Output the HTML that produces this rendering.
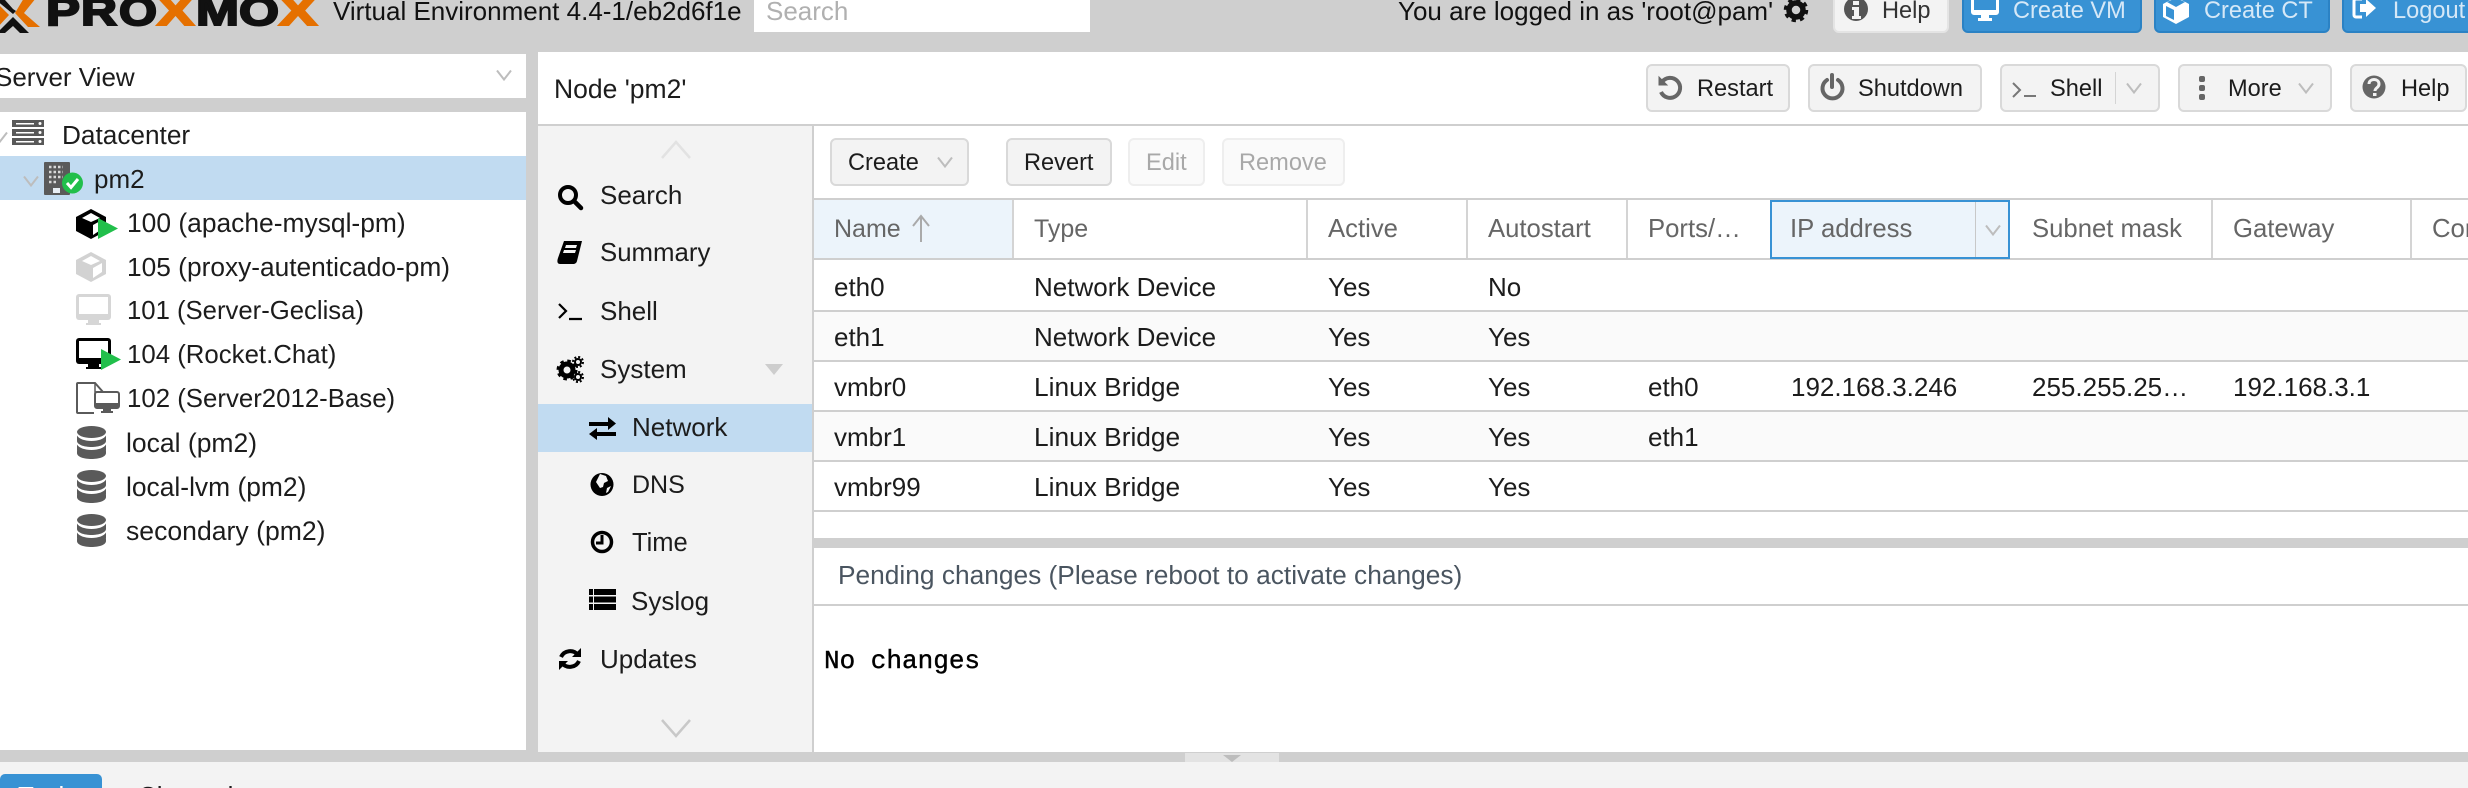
<!DOCTYPE html>
<html><head><meta charset="utf-8"><title>Proxmox</title>
<style>
html,body{margin:0;padding:0;background:#fff}
#p{position:relative;width:2468px;height:788px;overflow:hidden;background:#cfcfcf;font-family:"Liberation Sans",sans-serif;font-size:26px;color:#1c1c1c}
#p div{position:absolute;box-sizing:border-box}
.t{white-space:nowrap;line-height:30px;height:30px}
.h{color:#666;font-size:25.7px}
.s{font-size:23.6px}
.b{background:#f3f3f3;border:2px solid #d9d9d9;border-radius:6px}
.u{background:#3892d4;border:2px solid #2b82c4;border-radius:0 0 6px 6px;top:-8px;height:41px}
svg{position:absolute;left:0;top:0;overflow:visible}
</style></head><body><div id="p">
<!-- panels -->
<div style="left:754px;top:0;width:336px;height:32px;background:#fff"></div>
<div style="left:0;top:54px;width:526px;height:44px;background:#fff"></div>
<div style="left:0;top:112px;width:526px;height:638px;background:#fff"></div>
<div style="left:0;top:156px;width:526px;height:44px;background:#c1dbf1"></div>
<div style="left:538px;top:52px;width:1930px;height:72px;background:#fff"></div>
<div style="left:538px;top:126px;width:274px;height:626px;background:#f3f3f3"></div>
<div style="left:538px;top:404px;width:274px;height:48px;background:#c1dbf1"></div>
<div style="left:814px;top:126px;width:1654px;height:412px;background:#fff"></div>
<div style="left:814px;top:548px;width:1654px;height:204px;background:#fff"></div>
<div style="left:814px;top:604px;width:1654px;height:2px;background:#cfcfcf"></div>
<div style="left:0;top:762px;width:2468px;height:26px;background:#f3f3f3"></div>
<div style="left:1185px;top:753px;width:94px;height:9px;background:#e3e3e3"></div>
<div style="left:0;top:774px;width:102px;height:20px;background:#3892d4;border-radius:5px 5px 0 0"></div>
<!-- grid -->
<div style="left:814px;top:198px;width:1654px;height:2px;background:#cfcfcf"></div>
<div style="left:814px;top:200px;width:199px;height:58px;background:#ecf4fb"></div>
<div style="left:814px;top:258px;width:1654px;height:2px;background:#cfcfcf"></div>
<div style="left:814px;top:312px;width:1654px;height:48px;background:#fafafa"></div>
<div style="left:814px;top:412px;width:1654px;height:48px;background:#fafafa"></div>
<div style="left:814px;top:310px;width:1654px;height:2px;background:#cfcfcf"></div>
<div style="left:814px;top:360px;width:1654px;height:2px;background:#cfcfcf"></div>
<div style="left:814px;top:410px;width:1654px;height:2px;background:#cfcfcf"></div>
<div style="left:814px;top:460px;width:1654px;height:2px;background:#cfcfcf"></div>
<div style="left:814px;top:510px;width:1654px;height:2px;background:#cfcfcf"></div>
<div style="left:1012px;top:200px;width:2px;height:58px;background:#d4d4d4"></div>
<div style="left:1306px;top:200px;width:2px;height:58px;background:#d4d4d4"></div>
<div style="left:1466px;top:200px;width:2px;height:58px;background:#d4d4d4"></div>
<div style="left:1626px;top:200px;width:2px;height:58px;background:#d4d4d4"></div>
<div style="left:2211px;top:200px;width:2px;height:58px;background:#d4d4d4"></div>
<div style="left:2410px;top:200px;width:2px;height:58px;background:#d4d4d4"></div>
<div style="left:1770px;top:200px;width:240px;height:59px;background:#ecf4fb;border:2px solid #3892d4"></div>
<div style="left:1975px;top:202px;width:1px;height:55px;background:#c8c8c8"></div>
<!-- buttons -->
<div class="b" style="left:1833px;top:-8px;width:116px;height:41px;border-color:#e4e4e4"></div>
<div class="u" style="left:1962px;width:180px"></div>
<div class="u" style="left:2154px;width:176px"></div>
<div class="u" style="left:2342px;width:160px"></div>
<div class="b" style="left:1646px;top:64px;width:144px;height:48px"></div>
<div class="b" style="left:1808px;top:64px;width:174px;height:48px"></div>
<div class="b" style="left:2000px;top:64px;width:160px;height:48px"></div>
<div style="left:2115px;top:72px;width:1px;height:32px;background:#d4d4d4"></div>
<div class="b" style="left:2178px;top:64px;width:154px;height:48px"></div>
<div class="b" style="left:2350px;top:64px;width:117px;height:48px"></div>
<div class="b" style="left:830px;top:138px;width:139px;height:48px"></div>
<div class="b" style="left:1006px;top:138px;width:106px;height:48px"></div>
<div class="b" style="left:1128px;top:138px;width:77px;height:48px;background:#fafafa;border-color:#eee"></div>
<div class="b" style="left:1222px;top:138px;width:123px;height:48px;background:#fafafa;border-color:#eee"></div>

<!-- header text -->
<div class="t" style="left:333px;top:-4px;color:#111">Virtual Environment 4.4-1/eb2d6f1e</div>
<div class="t" style="left:766px;top:-4px;color:#b0b0b0">Search</div>
<div class="t" style="left:1398px;top:-4px;color:#111">You are logged in as 'root@pam'</div>
<div class="t s" style="left:1882px;top:-4px;color:#333">Help</div>
<div class="t s" style="left:2013px;top:-4px;color:#d5e8f7">Create VM</div>
<div class="t s" style="left:2204px;top:-4px;color:#d5e8f7">Create CT</div>
<div class="t s" style="left:2393px;top:-4px;color:#d5e8f7">Logout</div>
<!-- tree text -->
<div class="t" style="left:-5px;top:62px">Server View</div>
<div class="t" style="left:62px;top:120px;font-size:26.2px">Datacenter</div>
<div class="t" style="left:94px;top:164px">pm2</div>
<div class="t" style="left:127px;top:208px;font-size:26.4px">100 (apache-mysql-pm)</div>
<div class="t" style="left:127px;top:252px;font-size:26.3px">105 (proxy-autenticado-pm)</div>
<div class="t" style="left:127px;top:296px;font-size:25.7px">101 (Server-Geclisa)</div>
<div class="t" style="left:127px;top:340px;font-size:25.8px">104 (Rocket.Chat)</div>
<div class="t" style="left:127px;top:384px;font-size:25.8px">102 (Server2012-Base)</div>
<div class="t" style="left:126px;top:428px;font-size:26.5px">local (pm2)</div>
<div class="t" style="left:126px;top:472px;font-size:26.4px">local-lvm (pm2)</div>
<div class="t" style="left:126px;top:516px;font-size:26.6px">secondary (pm2)</div>
<!-- nav text -->
<div class="t" style="left:554px;top:74px;font-size:26.5px">Node 'pm2'</div>
<div class="t" style="left:600px;top:180px">Search</div>
<div class="t" style="left:600px;top:238px;font-size:25.8px">Summary</div>
<div class="t" style="left:600px;top:296px">Shell</div>
<div class="t" style="left:600px;top:354px">System</div>
<div class="t" style="left:632px;top:412px">Network</div>
<div class="t" style="left:632px;top:470px;font-size:25px">DNS</div>
<div class="t" style="left:632px;top:528px;font-size:25.5px">Time</div>
<div class="t" style="left:631px;top:586px">Syslog</div>
<div class="t" style="left:600px;top:644px">Updates</div>
<!-- toolbar text -->
<div class="t s" style="left:1697px;top:74px">Restart</div>
<div class="t s" style="left:1858px;top:74px">Shutdown</div>
<div class="t s" style="left:2050px;top:74px">Shell</div>
<div class="t s" style="left:2228px;top:74px">More</div>
<div class="t s" style="left:2401px;top:74px">Help</div>
<div class="t s" style="left:848px;top:148px">Create</div>
<div class="t s" style="left:1024px;top:148px">Revert</div>
<div class="t s" style="left:1146px;top:148px;color:#a8a8a8">Edit</div>
<div class="t s" style="left:1239px;top:148px;color:#a8a8a8">Remove</div>
<!-- grid header -->
<div class="t h" style="left:834px;top:214px;font-size:25px">Name</div>
<div class="t h" style="left:1034px;top:214px;font-size:25px">Type</div>
<div class="t h" style="left:1328px;top:214px">Active</div>
<div class="t h" style="left:1488px;top:214px">Autostart</div>
<div class="t h" style="left:1648px;top:214px">Ports/…</div>
<div class="t h" style="left:1790px;top:214px">IP address</div>
<div class="t h" style="left:2032px;top:214px">Subnet mask</div>
<div class="t h" style="left:2233px;top:214px">Gateway</div>
<div class="t h" style="left:2432px;top:214px">Comment</div>
<!-- rows -->
<div class="t" style="left:834px;top:272px">eth0</div><div class="t" style="left:1034px;top:272px">Network Device</div><div class="t" style="left:1328px;top:272px">Yes</div><div class="t" style="left:1488px;top:272px">No</div>
<div class="t" style="left:834px;top:322px">eth1</div><div class="t" style="left:1034px;top:322px">Network Device</div><div class="t" style="left:1328px;top:322px">Yes</div><div class="t" style="left:1488px;top:322px">Yes</div>
<div class="t" style="left:834px;top:372px">vmbr0</div><div class="t" style="left:1034px;top:372px;font-size:26.3px">Linux Bridge</div><div class="t" style="left:1328px;top:372px">Yes</div><div class="t" style="left:1488px;top:372px">Yes</div><div class="t" style="left:1648px;top:372px">eth0</div><div class="t" style="left:1791px;top:372px">192.168.3.246</div><div class="t" style="left:2032px;top:372px">255.255.25…</div><div class="t" style="left:2233px;top:372px">192.168.3.1</div>
<div class="t" style="left:834px;top:422px">vmbr1</div><div class="t" style="left:1034px;top:422px;font-size:26.3px">Linux Bridge</div><div class="t" style="left:1328px;top:422px">Yes</div><div class="t" style="left:1488px;top:422px">Yes</div><div class="t" style="left:1648px;top:422px">eth1</div>
<div class="t" style="left:834px;top:472px">vmbr99</div><div class="t" style="left:1034px;top:472px;font-size:26.3px">Linux Bridge</div><div class="t" style="left:1328px;top:472px">Yes</div><div class="t" style="left:1488px;top:472px">Yes</div>
<div class="t" style="left:838px;top:560px;color:#4a5560;font-size:26.3px">Pending changes (Please reboot to activate changes)</div>
<div class="t" style="left:824px;top:646px;font-family:'Liberation Mono',monospace;font-size:26px;color:#000;-webkit-text-stroke:.4px #000">No changes</div>
<div class="t" style="left:18px;top:781px;color:#fff">Tasks</div>
<div class="t" style="left:138px;top:781px">Cluster log</div>

<svg width="2468" height="788" viewBox="0 0 2468 788" fill="none">
<defs>
<g id="chev"><path d="M-7-4.500 0 4.500 7-4.500" stroke="#bdbdbd" stroke-width="2"/></g>
<g id="db" fill="#5a5a5a"><ellipse cx="14.500" cy="6" rx="14.500" ry="6"/><path d="M0 9.500C2 13 8 15 14.500 15S27 13 29 9.500V15C29 18.500 22 21 14.500 21S0 18.500 0 15Z"/><path d="M0 18.500C2 22 8 24 14.500 24S27 22 29 18.500V24C29 27.500 22 30 14.500 30S0 27.500 0 24Z"/><path d="M0 24.500C2 28 8 29 14.500 29S27 28 29 24.500V27C29 31 22 33 14.500 33S0 31 0 27Z"/></g>
<g id="play"><path d="M0 0 20 10.500 0 21Z" fill="#21bf4b"/></g>
</defs>
<!-- logo -->
<path d="M24-2H36L24 13 40 27H28L15 13Z" fill="#e57000"/>
<path d="M-3 3 9 15-3 28Z" fill="#e57000"/>
<path d="M13 17 29 33H20L13 26 5 33H-3Z" fill="#111"/>
<path d="M-4 0H5L13 9 16 11 13 14Z" fill="#111"/>
<g font-family="Liberation Sans" font-weight="700" font-size="40" stroke-width="2">
<text x="46" y="25" fill="#111" stroke="#111" textLength="34" lengthAdjust="spacingAndGlyphs">P</text>
<text x="81" y="25" fill="#111" stroke="#111" textLength="36" lengthAdjust="spacingAndGlyphs">R</text>
<text x="119" y="25" fill="#111" stroke="#111" textLength="38" lengthAdjust="spacingAndGlyphs">O</text>
<text x="157" y="25" fill="#e57000" stroke="#e57000" textLength="37" lengthAdjust="spacingAndGlyphs">X</text>
<text x="196" y="25" fill="#111" stroke="#111" textLength="43" lengthAdjust="spacingAndGlyphs">M</text>
<text x="239" y="25" fill="#111" stroke="#111" textLength="40" lengthAdjust="spacingAndGlyphs">O</text>
<text x="279" y="25" fill="#e57000" stroke="#e57000" textLength="38" lengthAdjust="spacingAndGlyphs">X</text>
</g>
<!-- top icons -->
<g transform="translate(1796 10)" stroke="#111"><circle r="7" stroke-width="5.500"/><circle r="10.500" stroke-width="3.500" stroke-dasharray="4.200 4.050"/></g>
<g transform="translate(5 0)"><circle cx="1851" cy="9" r="12" fill="#555"/><path d="M1848 1h6v4h-6zM1847 7h7v9h2v3h-9v-3h2v-6h-2z" fill="#f3f3f3"/></g>
<g transform="translate(7 0)"><path d="M1967-5h22a3 3 0 0 1 3 3v14a3 3 0 0 1-3 3h-7v3h3v3h-14v-3h3v-3h-7a3 3 0 0 1-3-3v-14a3 3 0 0 1 3-3z" fill="#fff"/><path d="M1967-5h22v15h-22z" fill="#3892d4"/></g>
<g transform="translate(11 0)"><path d="M2165-3 2178 4V17L2165 24 2152 17V4Z" fill="#fff"/><path d="M2163 10 2155 6V16L2163 20Z M2165 7 2174 2 2165-2 2156 2Z" fill="#3892d4"/></g>
<g transform="translate(16 0)"><path d="M2346-1h-6a2 2 0 0 0-2 2v14a2 2 0 0 0 2 2h6" stroke="#fff" stroke-width="3"/><path d="M2344 4h6v-5l10 9-10 9v-5h-6z" fill="#fff"/></g>
<!-- toolbar icons -->
<path d="M1662 82a10 10 0 1 1-1 10" stroke="#666" stroke-width="4"/><path d="M1659 77 1667 85 1659 85Z" fill="#666" stroke="#666"/>
<g transform="translate(4 -1)"><path d="M1823 81a10 10 0 1 0 11 0" stroke="#666" stroke-width="4" stroke-linecap="round"/><path d="M1828 76v12" stroke="#666" stroke-width="4" stroke-linecap="round"/></g>
<g transform="translate(8 0)"><path d="M2005 83 2012 90 2005 97M2016 96h12" stroke="#777" stroke-width="2"/></g>
<g fill="#666"><rect x="2199" y="76" width="6" height="6" rx="2"/><rect x="2199" y="85" width="6" height="6" rx="2"/><rect x="2199" y="94" width="6" height="6" rx="2"/></g>
<g transform="translate(15 0)"><circle cx="2359" cy="87" r="11.500" fill="#666"/><path d="M2354 84c0-6 10-6 10 0 0 4-4 3.500-4 7" stroke="#f3f3f3" stroke-width="3"/><rect x="2358" y="93" width="3.500" height="3" fill="#f3f3f3"/></g>
<use href="#chev" x="2134" y="88"/><use href="#chev" x="2306" y="88"/><use href="#chev" x="945" y="162"/><use href="#chev" x="1993" y="230"/>
<path d="M921 242V217M913 226 921 216 929 226" stroke="#aaa" stroke-width="2"/>
<use href="#chev" x="504" y="75"/><use href="#chev" x="0" y="137"/><use href="#chev" x="31" y="181"/>
<!-- datacenter -->
<g fill="#585858"><rect x="12" y="120" width="32" height="7"/><rect x="12" y="129" width="32" height="7"/><rect x="12" y="138" width="32" height="7"/></g>
<g fill="#fff"><rect x="16" y="123" width="18" height="1.500"/><rect x="16" y="132" width="18" height="1.500"/><rect x="16" y="141" width="18" height="1.500"/><circle cx="40" cy="123.500" r="1.500"/><circle cx="40" cy="132.500" r="1.500"/><circle cx="40" cy="141.500" r="1.500"/></g>
<!-- pm2 -->
<rect x="44" y="162" width="26" height="33" rx="1" fill="#5a5a5a"/>
<path d="M49 167h14M49 172h14M49 177h14M49 182h8" stroke="#d8d8d8" stroke-width="2.500" stroke-dasharray="2.500 2"/><rect x="53" y="188" width="7" height="5" fill="#e8eef4"/>
<circle cx="72.500" cy="183" r="10.500" fill="#21bf4b"/><path d="M67 183 71 187.500 78 179" stroke="#fff" stroke-width="3"/>
<!-- cts -->
<path d="M91 209 106 217V231L91 239 76 231V217Z" fill="#000"/><path d="M91 213 100 218 91 222 82 218ZM93 225 102 220V229L93 235Z" fill="#fff"/>
<use href="#play" x="98" y="218"/>
<path d="M91 252 106 260V274L91 282 76 274V260Z" fill="#d2d2d2"/><path d="M91 256 100 261 91 265 82 261ZM93 268 102 263V272L93 278Z" fill="#fff"/>
<!-- monitors -->
<rect x="76" y="294" width="35" height="26" rx="3" fill="#d6d6d6"/><rect x="79" y="297" width="29" height="17" fill="#fff"/><path d="M88 320h11v3h2v2H86v-2h2z" fill="#d6d6d6"/>
<rect x="76" y="338" width="35" height="26" rx="3" fill="#000"/><rect x="79" y="341" width="29" height="17" fill="#fff"/><path d="M88 364h11v3h2v2H86v-2h2z" fill="#000"/>
<use href="#play" x="101" y="349"/>
<path d="M94 413H78a1 1 0 0 1-1-1V384a1 1 0 0 1 1-1H95L103 392" stroke="#5a5a5a" stroke-width="2"/><path d="M95 383V392H103" stroke="#5a5a5a" stroke-width="1.500"/>
<rect x="95" y="392" width="24" height="16" rx="2" fill="#fff" stroke="#5a5a5a" stroke-width="2"/><rect x="95" y="403" width="24" height="5" fill="#5a5a5a"/><path d="M103 408h8v3h2v2h-12v-2h2z" fill="#5a5a5a"/>
<use href="#db" x="77" y="426"/><use href="#db" x="77" y="470"/><use href="#db" x="77" y="514"/>
<!-- nav icons -->
<circle cx="568" cy="195" r="8" stroke="#000" stroke-width="4"/><path d="M574 201 581 208" stroke="#000" stroke-width="4.500" stroke-linecap="round"/>
<path d="M564 241H582L577 261C576.500 263 575 264 573 264H560C557 264 557 261 558 258ZM566 245 565 248H576L577 245ZM564 250 563 253H575L576 250Z" fill="#000" fill-rule="evenodd"/>
<path d="M559 304 566 311 559 318M569 319h13" stroke="#000" stroke-width="2.200"/>
<g stroke="#000"><g transform="translate(567 370)"><circle r="6" stroke-width="5"/><circle r="9" stroke-width="3" stroke-dasharray="3.500 3.570"/></g><g transform="translate(578 362)"><circle r="3" stroke-width="2"/><circle r="5" stroke-width="2" stroke-dasharray="2 1.930"/></g><g transform="translate(578 377)"><circle r="3" stroke-width="2"/><circle r="5" stroke-width="2" stroke-dasharray="2 1.930"/></g></g>
<path d="M589 423H608V418L616 424.500 608 431V427H589ZM616 433H597V429L589 435 597 441V437H616Z" fill="#000" transform="translate(0 -1)"/>
<circle cx="602" cy="484.500" r="11.500" fill="#000"/><path d="M600 474 606 476 608 481 604 483 603 487 600 488 596 482ZM607 488 611 486 608 492 606 493Z" fill="#f3f3f3"/>
<circle cx="602" cy="542" r="9.500" stroke="#000" stroke-width="3.500"/><path d="M602 535V543H596" stroke="#000" stroke-width="3"/>
<path d="M589 589h4v6h-4zM594 589h22v6H594zM589 596.500h4v6h-4zM594 596.500h22v6H594zM589 604h4v6h-4zM594 604h22v6H594z" fill="#000"/>
<path d="M578 655A10 10 0 0 0 561 657M562 663A10 10 0 0 0 579 661" stroke="#000" stroke-width="4"/><path d="M581 648V657H572ZM559 670V661H568Z" fill="#000"/>
<!-- scrollers -->
<path d="M662 158 676 142 690 158" stroke="#e2e2e2" stroke-width="2.500"/>
<path d="M662 720 676 736 690 720" stroke="#c8c8c8" stroke-width="2.500"/>
<path d="M765 364H783L774 375Z" fill="#cdcdcd"/>
<path d="M1223 755H1241L1232 762Z" fill="#bdbdbd"/>
</svg>
</div></body></html>
